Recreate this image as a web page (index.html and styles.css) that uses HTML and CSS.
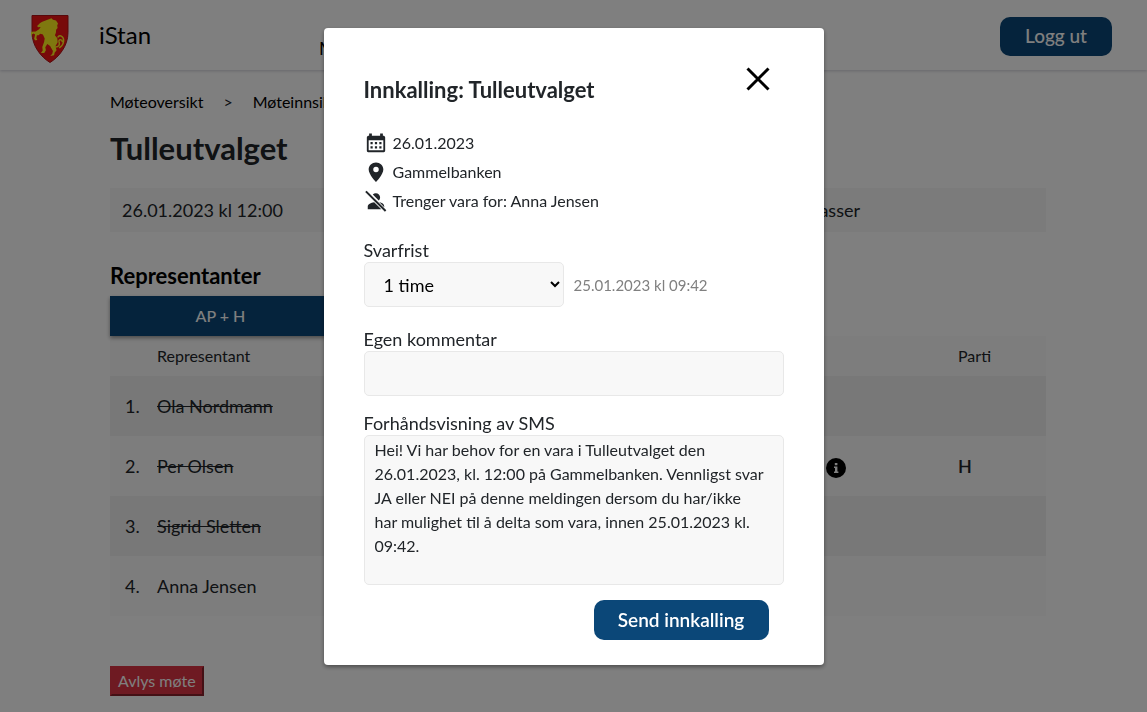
FILE: index.html
```html
<!DOCTYPE html>
<html lang="no">
<head>
<meta charset="utf-8">
<title>iStan</title>
<link rel="stylesheet" href="styles.css">
</head>
<body>
<header class="topbar">
  <svg class="crest" viewBox="0 0 38 48" aria-hidden="true">
    <path fill="#f01414" stroke="#b01216" d="M1 .5h36v17C37 31 28 42 19 47.500 10 42 1 31 1 17.500z"/>
    <path fill="#fff01e" d="M20.500 3.200l1.500 1.600 3 .6 2 3-.8 2.200 .4 2.500-1.500 1.600-.2 3-1 2.600 2.400 3 .4 4-2.300 4 1.200 4-2 2.500-.5 2.500-3.800.8 2-2.400.6-2.600-2.800-5-2.800-2-2 3.200.6 3-1.600 2.600-3.400 0 1.800-2.400-.4-3.400 1.800-5 .6-3.600-1.800-4-2.600-.8-1.800 1.600-1.600 0-.6 2.600 1 1.800-1.600.8-1.600-1.400 1-4.600-1.600-1-1.600 1-.6 2.400-1.200-.4-.4-2.400 1.400-2.400 4.600-.2 3.400-2.200 1.600-2.400-2.600.4-1-1.400 3-2.800 2.200-1.400z"/>
    <path fill="none" stroke="#fff01e" stroke-width="1.500" stroke-linecap="round" d="M24.500 32c3.500 0 4.500-2.500 3.600-5-1-3 3-3 3.200-.4M27 22c2-2.500 6-.5 5.600 4-.2 3-1.600 5-4 6.500"/>
  </svg>
  <a class="brand" href="#">iStan</a>
  <nav class="nav"><a href="#">Møter</a></nav>
  <button class="btn logout" type="button">Logg ut</button>
</header>
<main class="page">
  <nav class="crumbs"><a href="#">Møteoversikt</a><span>&gt;</span><a href="#">Møteinnsikt</a></nav>
  <h1 class="page-title">Tulleutvalget</h1>
  <div class="info"><span>26.01.2023 kl 12:00</span><span class="info-place">4 plasser</span></div>
  <h2 class="section-title">Representanter</h2>
  <div class="tabs"><button class="tab" type="button">AP + H</button></div>
  <table class="reps">
    <colgroup><col class="col-num"><col class="col-name"><col class="col-info"><col class="col-party"></colgroup>
    <thead><tr><th></th><th>Representant</th><th></th><th>Parti</th></tr></thead>
    <tbody>
      <tr><td>1.</td><td><s>Ola Nordmann</s></td><td></td><td></td></tr>
      <tr><td>2.</td><td><s>Per Olsen</s></td><td><svg class="info-icon" viewBox="0 0 20 20" aria-hidden="true"><circle cx="10" cy="10" r="10"/><path fill="#fff" d="M8.800 5h2.600v2.200H8.800zM8 8.600h3.400v5h1V15H8v-1.400h1V10H8z"/></svg></td><td class="party">H</td></tr>
      <tr><td>3.</td><td><s>Sigrid Sletten</s></td><td></td><td></td></tr>
      <tr><td>4.</td><td>Anna Jensen</td><td></td><td></td></tr>
    </tbody>
  </table>
  <button class="cancel" type="button">Avlys møte</button>
</main>
<div class="overlay">
  <form class="modal" role="dialog" aria-labelledby="modal-title">
    <div class="modal-head">
      <h2 class="modal-title" id="modal-title">Innkalling: Tulleutvalget</h2>
      <button class="close" type="button" aria-label="Lukk"><svg viewBox="0 0 24 24"><path d="M1.500 1.500l21 21M22.500 1.500l-21 21" stroke="#000" stroke-width="3"/></svg></button>
    </div>
    <ul class="facts">
      <li><svg class="fact-icon" viewBox="0 0 24 24"><path fill-rule="evenodd" d="M4.500 1.500h3V4h9V1.500h3V4c1.500 0 2.500.6 2.500 2v14.500c0 1-.7 1.500-1.500 1.500h-17C2.600 22 2 21.400 2 20.500V6c0-1.400 1-2 2.500-2zM4 9v11h16V9zM6 11h2.400v2.400H6zm4.800 0h2.400v2.400h-2.400zm4.800 0H18v2.400h-2.400zM6 15.600h2.400V18H6zm4.800 0h2.400V18h-2.400zm4.800 0H18V18h-2.400z"/></svg>26.01.2023</li>
      <li><svg class="fact-icon" viewBox="0 0 24 24"><path fill-rule="evenodd" d="M12 1.500c-4.400 0-8 3.300-8 7.700C4 14.500 12 23 12 23s8-8.500 8-13.800c0-4.400-3.600-7.700-8-7.700zm0 4.800a3 3 0 1 1 0 6 3 3 0 0 1 0-6z"/></svg>Gammelbanken</li>
      <li><svg class="fact-icon" viewBox="0 0 24 24"><path d="M8.500 5A4.600 4.600 0 1 1 15 11.500zM3 21v-3c0-2.500 3.500-4.200 7-4.700L17.800 21zM15.500 13.200c3 .7 5.500 2.300 5.500 4.800v.7z"/><path d="M1 1.500l21.500 21.500" fill="none" stroke="#212529" stroke-width="2.200"/></svg>Trenger vara for: Anna Jensen</li>
    </ul>
    <div class="field deadline-field">
      <label for="deadline">Svarfrist</label>
      <div class="deadline-row">
        <select class="control select" id="deadline"><option>1 time</option></select>
        <span class="deadline">25.01.2023 kl 09:42</span>
      </div>
    </div>
    <div class="field">
      <label for="comment">Egen kommentar</label>
      <input class="control" id="comment" type="text">
    </div>
    <div class="field sms-field">
      <label for="sms">Forhåndsvisning av SMS</label>
      <textarea class="control sms" id="sms" readonly>Hei! Vi har behov for en vara i Tulleutvalget den 26.01.2023, kl. 12:00 på Gammelbanken. Vennligst svar JA eller NEI på denne meldingen dersom du har/ikke har mulighet til å delta som vara, innen 25.01.2023 kl. 09:42.</textarea>
    </div>
    <button class="btn send" type="submit">Send innkalling</button>
  </form>
</div>
</body>
</html>
```
FILE: styles.css
```css
* { box-sizing: border-box; }
body {
  margin: 0;
  background: #fff;
  color: #212529;
  font: 16px/24px Lato, "Noto Sans", sans-serif;
}
h1, h2, ul { margin: 0; padding: 0; }
a { color: #000; text-decoration: none; }
button, input, select, textarea { font: inherit; }

.topbar {
  display: flex;
  align-items: center;
  height: 70px;
  padding: 0 35px 0 31px;
  box-shadow: 0 1px 3px rgba(0, 0, 50, .2);
}
.crest { width: 38px; height: 48px; margin-top: 8px; }
.brand { width: 220px; margin-left: 30px; font-size: 24px; }
.nav { flex: 1; padding-top: 26px; font-size: 18px; }
.btn {
  border: 0;
  border-radius: 10px;
  background: #0b4778;
  color: #fff;
  font-size: 19px;
  font-weight: 600;
}
.logout { width: 112px; height: 39px; margin-top: 3px; padding-bottom: 2px; font-weight: 500; }

.page { padding: 20px 101px 16px 110px; }
.crumbs { display: flex; gap: 20px; }
.page-title { margin-top: 14px; font-size: 31px; line-height: 40px; }
.info {
  display: flex;
  align-items: center;
  height: 44px;
  margin-top: 20px;
  padding: 0 186px 0 12px;
  background: #f7f7f7;
  font-size: 18px;
}
.info-place { margin-left: auto; }
.section-title { margin-top: 28px; color: #000; font-size: 22px; line-height: 32px; }
.tabs {
  position: relative;
  display: flex;
  width: 442px;
  height: 40px;
  margin-top: 4px;
  background: #0b4778;
  box-shadow: 0 2px 4px rgba(0, 0, 0, .4);
}
.tab {
  width: 221px;
  border: 0;
  background: none;
  color: #fff;
  font-weight: 500;
}
.reps { width: 100%; table-layout: fixed; border-collapse: collapse; background: #fafafa; font-size: 18px; }
.reps th { height: 40px; padding: 0; font-size: 16px; font-weight: 400; text-align: left; }
.reps td { height: 60px; padding: 0; }
.reps td:first-child { padding-left: 15px; }
.reps tbody tr:nth-child(odd) { background: #f0f0f0; }
.col-num { width: 47px; }
.col-info { width: 132px; }
.col-party { width: 88px; }
.reps .party { font-weight: 600; }
.info-icon { display: block; width: 20px; height: 20px; margin-top: 3px; }
.cancel {
  height: 30px;
  margin-top: 50px;
  padding: 0 6px;
  border: 2px outset #dc3545;
  background: #dc3545;
  color: #fff;
}

.overlay {
  position: fixed;
  inset: 0;
  display: flex;
  justify-content: center;
  align-items: flex-start;
  padding-top: 28px;
  overflow: auto;
  background: rgba(0, 0, 0, .5);
}
.modal {
  width: 500px;
  padding: 35px 40px 25px;
  border-radius: 4px;
  background: #fff;
  box-shadow: 0 2px 4px rgba(0, 0, 0, .4);
}
.modal-head { display: flex; justify-content: space-between; align-items: flex-start; }
.modal-title { padding-top: 11px; font-size: 22px; line-height: 32px; }
.close { width: 32px; height: 32px; margin-right: 10px; padding: 4px; border: 0; background: none; }
.close svg { display: block; width: 24px; height: 24px; }
.facts { display: grid; gap: 5px; margin-top: 25px; list-style: none; }
.facts li { display: flex; align-items: center; gap: 5px; }
.fact-icon { width: 24px; height: 24px; padding: 1px; fill: #212529; }
.field { margin-top: 20px; font-size: 18px; }
.deadline-field { margin-top: 25px; }
.sms-field { margin-top: 15px; }
.field label { display: block; height: 24px; }
.control {
  display: block;
  width: 100%;
  height: 45px;
  padding: 0 10px;
  border: 1px solid #e8e8e8;
  border-radius: 5px;
  background: #f8f8f8;
  color: #000;
}
.select { width: 200px; padding: 0 0 0 15px; }
.deadline-row { display: flex; align-items: center; gap: 10px; }
.deadline { color: #808080; font-size: 15px; }
.sms { height: 150px; padding: 2px 17px 2px 10px; color: #212529; font-size: 16px; resize: none; }
.send { display: block; width: 175px; height: 40px; margin: 15px 15px 0 auto; }
```
